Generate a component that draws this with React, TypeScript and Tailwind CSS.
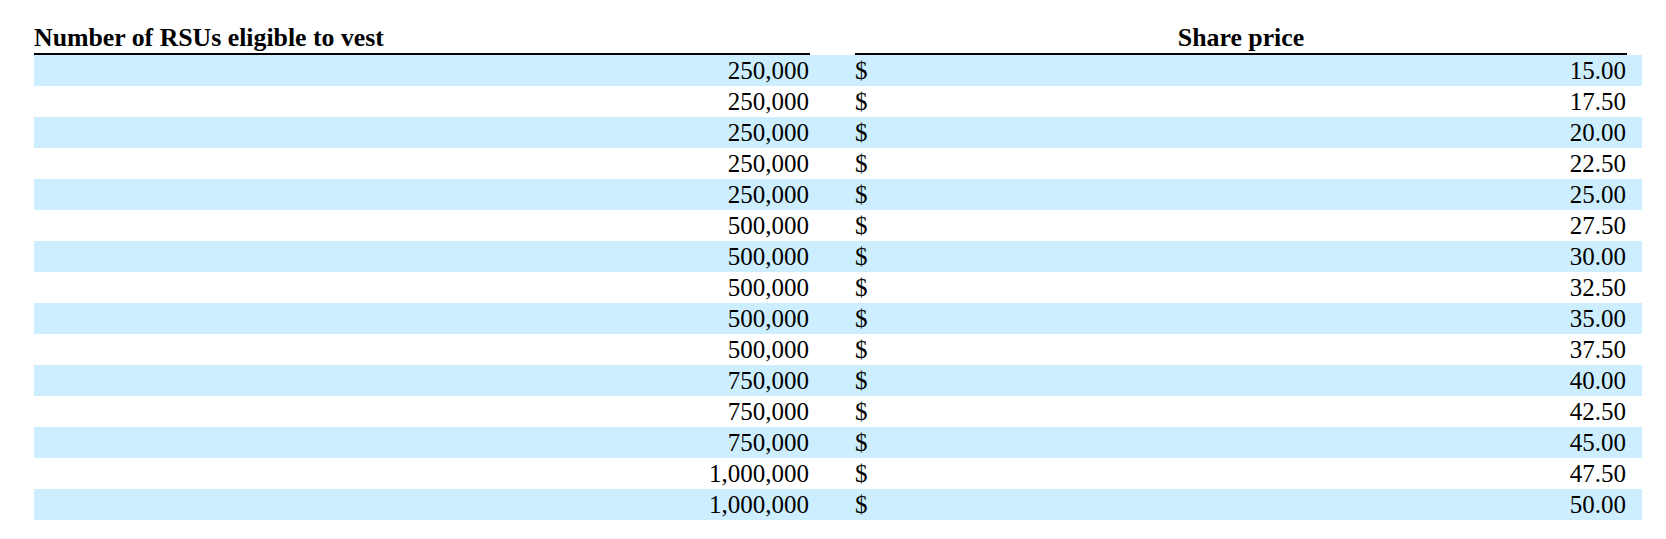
const rows: [string, string][] = [
  ["250,000", "15.00"],
  ["250,000", "17.50"],
  ["250,000", "20.00"],
  ["250,000", "22.50"],
  ["250,000", "25.00"],
  ["500,000", "27.50"],
  ["500,000", "30.00"],
  ["500,000", "32.50"],
  ["500,000", "35.00"],
  ["500,000", "37.50"],
  ["750,000", "40.00"],
  ["750,000", "42.50"],
  ["750,000", "45.00"],
  ["1,000,000", "47.50"],
  ["1,000,000", "50.00"],
];

export default function App() {
  return (
    <div className="w-[1666px] h-[539px] bg-white text-black font-['Liberation_Serif',serif] text-[25px] leading-[31px]">
      <div className="ml-[34px] w-[1608px]">
        <div className="grid grid-cols-[776px_45px_772px_15px] h-[55px] text-[25.8px]">
          <div className="border-b-2 border-black pt-[22px] font-bold whitespace-nowrap">
            Number of RSUs eligible to vest
          </div>
          <div />
          <div className="border-b-2 border-black pt-[22px] font-bold text-center">
            Share price
          </div>
          <div />
        </div>
        {rows.map(([units, price], i) => (
          <div
            key={i}
            className={`grid grid-cols-[776px_45px_40px_732px_15px] h-[31px] ${
              i % 2 === 0 ? "bg-[#cceeff]" : "bg-white"
            }`}
          >
            <div className="text-right pr-[1px]">{units}</div>
            <div />
            <div>$</div>
            <div className="text-right pr-[1px]">{price}</div>
            <div />
          </div>
        ))}
      </div>
    </div>
  );
}
